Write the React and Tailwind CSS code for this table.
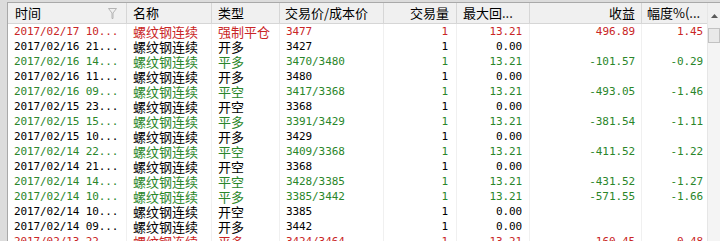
import React from "react";

const cols = "grid grid-cols-[119px_85px_68px_104px_73px_73px_112px_1fr]";
const cjk = "font-['Noto_Sans_CJK_SC','Noto_Sans',sans-serif]";
const mono = "font-['DejaVu_Sans_Mono','Liberation_Mono',monospace] text-[11px] tracking-[-0.1px]";

const colorOf = {
  r: "text-[#c92626]",
  g: "text-[#2a862a]",
  k: "text-black",
};

const rows = [
  ["r", "2017/02/17 10...", "强制平仓", "3477", "13.21", "496.89", "1.45"],
  ["k", "2017/02/16 21...", "开多", "3427", "0.00", "", ""],
  ["g", "2017/02/16 14...", "平多", "3470/3480", "13.21", "-101.57", "-0.29"],
  ["k", "2017/02/16 11...", "开多", "3480", "0.00", "", ""],
  ["g", "2017/02/16 09...", "平空", "3417/3368", "13.21", "-493.05", "-1.46"],
  ["k", "2017/02/15 23...", "开空", "3368", "0.00", "", ""],
  ["g", "2017/02/15 15...", "平多", "3391/3429", "13.21", "-381.54", "-1.11"],
  ["k", "2017/02/15 10...", "开多", "3429", "0.00", "", ""],
  ["g", "2017/02/14 22...", "平空", "3409/3368", "13.21", "-411.52", "-1.22"],
  ["k", "2017/02/14 21...", "开空", "3368", "0.00", "", ""],
  ["g", "2017/02/14 14...", "平空", "3428/3385", "13.21", "-431.52", "-1.27"],
  ["g", "2017/02/14 10...", "平多", "3385/3442", "13.21", "-571.55", "-1.66"],
  ["k", "2017/02/14 10...", "开空", "3385", "0.00", "", ""],
  ["k", "2017/02/14 09...", "开多", "3442", "0.00", "", ""],
  ["r", "2017/02/13 22...", "平多", "3424/3464", "13.21", "160.45", "0.48"],
];

const Header = () => (
  <div className={`${cols} h-[25px] bg-[#f0f0f0] border-b border-[#d6d6d6] text-[13px] text-black ${cjk}`}>
    <div className="flex items-center justify-between pl-[7px] pr-[9px] border-r border-[#d6d6d6]">
      <span>时间</span>
      <svg width="9" height="11" viewBox="0 0 9 11" className="mt-[1px]">
        <path d="M0.5 0.5 H8.5 L5 5 V10.5 L4 10.5 V5 Z" fill="none" stroke="#b4b4b4" strokeWidth="1" />
      </svg>
    </div>
    <div className="flex items-center pl-[6px] border-r border-[#d6d6d6]">名称</div>
    <div className="flex items-center pl-[6px] border-r border-[#d6d6d6]">类型</div>
    <div className="flex items-center pl-[5px] border-r border-[#d6d6d6]">交易价/成本价</div>
    <div className="flex items-center justify-end pr-[7px] border-r border-[#d6d6d6]">交易量</div>
    <div className="flex items-center pl-[6px] border-r border-[#d6d6d6] whitespace-nowrap">最大回...</div>
    <div className="flex items-center justify-end pr-[6px] border-r border-[#d6d6d6]">收益</div>
    <div className="flex items-center pl-[5px] whitespace-nowrap">幅度%(...</div>
  </div>
);

const Row = ({ row }) => {
  const [c, time, type, price, max, profit, pct] = row;
  const cell = "flex items-center h-[15px] leading-[15px] border-r border-[#f0f0f0] whitespace-nowrap";
  return (
    <div className={`${cols} h-[15px] ${colorOf[c]}`}>
      <div className={`${cell} pl-[6px] ${mono}`}>{time}</div>
      <div className={`${cell} pl-[6px] text-[13px] ${cjk}`}>螺纹钢连续</div>
      <div className={`${cell} pl-[6px] text-[13px] ${cjk}`}>{type}</div>
      <div className={`${cell} pl-[6px] ${mono}`}>{price}</div>
      <div className={`${cell} justify-end pr-[8px] ${mono}`}>1</div>
      <div className={`${cell} justify-end pr-[7px] ${mono}`}>{max}</div>
      <div className={`${cell} justify-end pr-[6px] ${mono}`}>{profit}</div>
      <div className={`flex items-center h-[15px] leading-[15px] justify-end pr-[4px] whitespace-nowrap ${mono}`}>{pct}</div>
    </div>
  );
};

const Scrollbar = () => (
  <div className="w-[13px] flex flex-col bg-[#f4f4f4] border-l border-[#e6e6e6]">
    <div className="h-[25px] flex items-center justify-center bg-[#f0f0f0]">
      <svg width="7" height="4" viewBox="0 0 7 4">
        <path d="M3.5 0 L7 4 H0 Z" fill="#5a5a5a" />
      </svg>
    </div>
    <div className="h-[15px] bg-[#e9e9e9] border border-[#c2c2c2]" />
    <div className="flex-1" />
  </div>
);

export default function App() {
  return (
    <div className="w-[720px] h-[241px] overflow-hidden bg-[#dcdcdc] pt-[2px] pl-[7px]">
      <div className="h-full flex bg-white border-t border-l border-[#a9a9a9]">
        <div className="flex-1 flex flex-col overflow-hidden">
          <Header />
          {rows.map((r, i) => (
            <Row key={i} row={r} />
          ))}
        </div>
        <Scrollbar />
      </div>
    </div>
  );
}
